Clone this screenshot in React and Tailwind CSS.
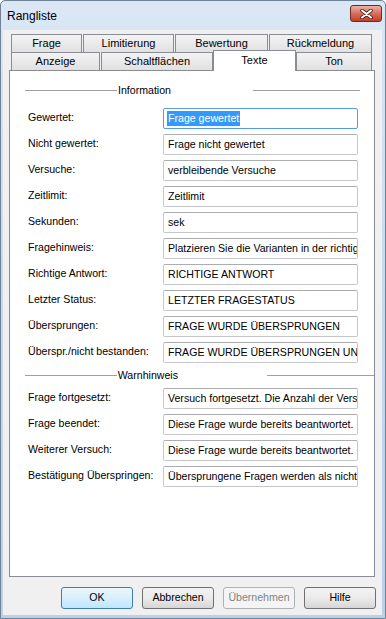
import React from 'react';

const font = { fontFamily: '"Liberation Sans", Arial, sans-serif' };

const infoRows = [
    ["Gewertet:", "Frage gewertet"],
    ["Nicht gewertet:", "Frage nicht gewertet"],
    ["Versuche:", "verbleibende Versuche"],
    ["Zeitlimit:", "Zeitlimit"],
    ["Sekunden:", "sek"],
    ["Fragehinweis:", "Platzieren Sie die Varianten in der richtig"],
    ["Richtige Antwort:", "RICHTIGE ANTWORT"],
    ["Letzter Status:", "LETZTER FRAGESTATUS"],
    ["Übersprungen:", "FRAGE WURDE ÜBERSPRUNGEN"],
    ["Überspr./nicht bestanden:", "FRAGE WURDE ÜBERSPRUNGEN UN"],
]

const warnRows = [
    ["Frage fortgesetzt:", "Versuch fortgesetzt. Die Anzahl der Vers"],
    ["Frage beendet:", "Diese Frage wurde bereits beantwortet. I"],
    ["Weiterer Versuch:", "Diese Frage wurde bereits beantwortet. I"],
    ["Bestätigung Überspringen:", "Übersprungene Fragen werden als nicht"],
]

function Tab({label, width}) {
    return (
        <div className={"h-[18px] flex items-center justify-center border border-[#898c95] border-b-0 bg-gradient-to-b from-[#f3f3f3] to-[#e1e1e1] text-[11px] text-black " + width}>
            {label}
        </div>
    )
}

function Header({label, textWidth}) {
    return (
        <div className="flex items-center h-[14px] ml-[15px]">
            <div className="w-[92px] h-px bg-[#a0a0a0]"></div>
            <div className={"text-[10.6px] text-black pl-px leading-none " + textWidth}>{label}</div>
            <div className="w-[107px] h-px bg-[#a0a0a0]"></div>
        </div>
    )
}

function Row({label, value, focused}) {
    return (
        <div className="flex items-center h-[21px] ml-[18px]">
            <div className="w-[135px] text-[10.6px] text-black -mt-[2px] whitespace-nowrap">{label}</div>
            <div className={"w-[195px] h-[21px] rounded-[2px] border overflow-hidden whitespace-nowrap flex items-center pl-[3px] text-[10.6px] bg-white " + (focused ? "border-[#569de5]" : "border-[#c5c7cc] border-t-[#abadb3]")}>
                {focused
                    ? <span className="bg-[#3399ff] text-white px-px">{value}</span>
                    : <span className="text-black px-px">{value}</span>}
            </div>
        </div>
    )
}

function Button({label, kind}) {
    let cls = "border-[#707070] bg-gradient-to-b from-[#f2f2f2] via-[#ebebeb] to-[#d6d6d6] text-black"
    if (kind === "default") cls = "border-[#3c7fb1] bg-gradient-to-b from-[#eaf6fd] via-[#d9f0fc] to-[#bee6fd] text-black"
    if (kind === "disabled") cls = "border-[#adb2b5] bg-[#f4f4f4] text-[#838383]"
    return (
        <div className={"w-[72px] h-[22px] rounded-[3px] border flex items-center justify-center text-[10.6px] " + cls}>
            {label}
        </div>
    )
}

export default function App() {
    return (
        <div style={font} className="w-[386px] h-[619px] border border-[#6e8197] bg-gradient-to-b from-[#dbe7f4] via-[#c6d8ec] to-[#bcd1e8] flex flex-col rounded-t-[5px] overflow-hidden">
            <div className="h-[29px] flex items-start justify-between pl-[6px] pr-[3px]">
                <div className="text-[12px] text-black mt-[6px]">Rangliste</div>
                <div className="mt-[4px] w-[32px] h-[17px] rounded-[3px] border border-[#6a2b25] bg-gradient-to-b from-[#eab3a6] via-[#d66f5c] to-[#c23e28] flex items-center justify-center">
                    <svg width="13" height="10" viewBox="0 0 13 10">
                        <path d="M2 1.5 L11 8.5 M11 1.5 L2 8.5" stroke="#4a2420" strokeWidth="3.6" strokeLinecap="round" />
                        <path d="M2 1.5 L11 8.5 M11 1.5 L2 8.5" stroke="#ffffff" strokeWidth="2" strokeLinecap="round" />
                    </svg>
                </div>
            </div>
            <div className="ml-[2px] mr-[3px] h-[585px] bg-[#f0f0f0] flex flex-col pt-[4px]">
                <div className="flex flex-col ml-[8px]">
                    <div className="flex gap-px">
                        <Tab label="Frage" width="w-[71px]" />
                        <Tab label="Limitierung" width="w-[91px]" />
                        <Tab label="Bewertung" width="w-[93px]" />
                        <Tab label="Rückmeldung" width="w-[103px]" />
                    </div>
                    <div className="flex items-end h-[18px]">
                        <Tab label="Anzeige" width="w-[89px] mr-px" />
                        <Tab label="Schaltflächen" width="w-[112px]" />
                        <div className="relative z-10 -mb-px w-[83px] h-[21px] border border-[#898c95] border-b-0 bg-white flex items-center justify-center text-[11px] text-black pb-[2px]">
                            Texte
                        </div>
                        <Tab label="Ton" width="w-[76px]" />
                    </div>
                </div>
                <div className="ml-[6px] w-[366px] h-[507px] border border-[#898c95] bg-white flex flex-col pt-[12px]">
                    <Header label="Information" textWidth="w-[136px]" />
                    <div className="flex flex-col gap-[5px] mt-[11px]">
                        {infoRows.map((r, i) => <Row key={r[0]} label={r[0]} value={r[1]} focused={i === 0} />)}
                    </div>
                    <div className="mt-[5px]">
                        <Header label="Warnhinweis" textWidth="w-[151px]" />
                    </div>
                    <div className="flex flex-col gap-[5px] mt-[6px]">
                        {warnRows.map((r) => <Row key={r[0]} label={r[0]} value={r[1]} />)}
                    </div>
                </div>
                <div className="flex justify-end gap-[9px] mt-[10px] mr-[6px]">
                    <Button label="OK" kind="default" />
                    <Button label="Abbrechen" />
                    <Button label="Übernehmen" kind="disabled" />
                    <Button label="Hilfe" />
                </div>
            </div>
        </div>
    );
}
